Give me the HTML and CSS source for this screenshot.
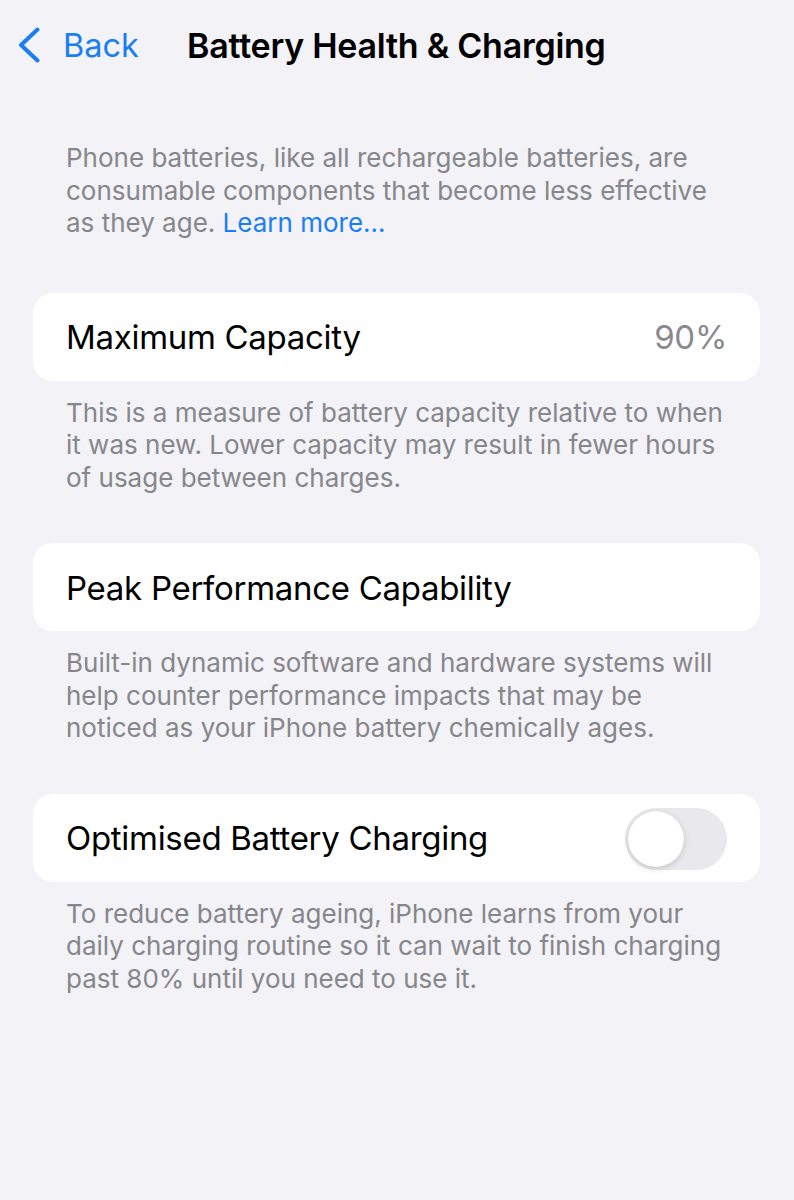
FILE: index.html
```html
<!DOCTYPE html>
<html>
<head>
<meta charset="utf-8">
<link rel="stylesheet" href="styles.css">
</head>
<body>
<div class="screen">
  <header class="nav">
    <div class="back">
      <svg class="chev" width="26" height="36" viewBox="0 0 26 36"><path d="M19.5 2.5 L3 18 L19.5 33.5" fill="none" stroke="#1a7ef2" stroke-width="4" stroke-linecap="round" stroke-linejoin="round"/></svg>
      <span class="back-label">Back</span>
    </div>
    <h1 class="title">Battery Health &amp; Charging</h1>
  </header>

  <p class="note intro">Phone batteries, like all rechargeable batteries, are consumable components that become less effective as they age. <span class="link">Learn more…</span></p>

  <div class="card">
    <span class="label">Maximum Capacity</span>
    <span class="value">90%</span>
  </div>
  <p class="note">This is a measure of battery capacity relative to when it was new. Lower capacity may result in fewer hours of usage between charges.</p>

  <div class="card">
    <span class="label">Peak Performance Capability</span>
  </div>
  <p class="note">Built-in dynamic software and hardware systems will help counter performance impacts that may be noticed as your iPhone battery chemically ages.</p>

  <div class="card">
    <span class="label">Optimised Battery Charging</span>
    <div class="toggle"><div class="knob"></div></div>
  </div>
  <p class="note">To reduce battery ageing, iPhone learns from your daily charging routine so it can wait to finish charging past 80% until you need to use it.</p>
</div>
</body>
</html>
```
FILE: styles.css
```css
html, body {
  margin: 0;
  padding: 0;
  background: #f2f2f7;
}
body {
  font-family: Inter, "Noto Sans", sans-serif;
  -webkit-font-smoothing: antialiased;
}
.screen {
  width: 794px;
  height: 1200px;
  box-sizing: border-box;
  padding: 0 34px 0 33px;
}
.nav {
  display: flex;
  align-items: center;
  height: 90px;
  margin-left: -15px;
}
.back {
  display: flex;
  align-items: center;
  gap: 19px;
  width: 169px;
}
.chev { display: block; }
.back-label {
  color: #1a7ef2;
  font-size: 32.5px;
}
.title {
  margin: 0;
  font-size: 34px;
  font-weight: 600;
  color: #000;
  letter-spacing: -0.25px;
}
.note {
  margin: 0;
  padding: 0 33px;
  font-size: 26px;
  line-height: 32.5px;
  color: #86868b;
}
.intro {
  margin-top: 52px;
  margin-bottom: 53px;
}
.link { color: #1a7ef2; }
.card {
  background: #fff;
  border-radius: 20px;
  height: 88px;
  display: flex;
  align-items: center;
  justify-content: space-between;
  padding: 0 33px;
}
.card + .note {
  margin-top: 16px;
  margin-bottom: 49px;
}
.label {
  font-size: 33px;
  color: #000;
  letter-spacing: -0.3px;
  padding-top: 1px;
}
.value {
  font-size: 33px;
  color: #8a8a8e;
  letter-spacing: -0.3px;
  padding-top: 1px;
}
.toggle {
  width: 102px;
  height: 62px;
  border-radius: 31px;
  background: #e9e9eb;
  position: relative;
  margin-top: 2px;
}
.knob {
  position: absolute;
  left: 3px;
  top: 3px;
  width: 56px;
  height: 56px;
  border-radius: 50%;
  background: #fff;
  box-shadow: 0 2px 6px rgba(0,0,0,0.15), 0 0 1px rgba(0,0,0,0.12);
}
```
